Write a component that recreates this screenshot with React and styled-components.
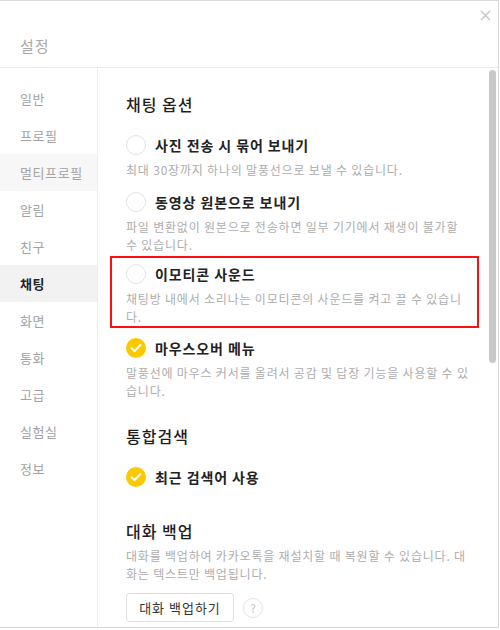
import styled, { createGlobalStyle } from "styled-components";

const GlobalStyle = createGlobalStyle`
  html, body {
    margin: 0;
    padding: 0;
    background: #fff;
  }
  body {
    font-family: "Noto Sans CJK KR", "Noto Sans", sans-serif;
  }
`;

const Window = styled.div`
  width: 499px;
  height: 628px;
  box-sizing: border-box;
  border: 1px solid #d9d9d9;
  border-left: none;
  background: #fff;
  display: flex;
  flex-direction: column;
  overflow: hidden;
`;

const Header = styled.div`
  height: 67px;
  box-sizing: border-box;
  border-bottom: 1px solid #e8e8e8;
  position: relative;
  padding: 35px 0 0 20px;
`;

const Title = styled.div`
  font-size: 15px;
  line-height: 20px;
  letter-spacing: 1px;
  color: #a8a8a8;
`;

const CloseButton = styled.button`
  position: absolute;
  top: 7px;
  right: 6px;
  width: 14px;
  height: 14px;
  padding: 0;
  border: none;
  background: none;
  display: flex;
  align-items: center;
  justify-content: center;
`;

const Body = styled.div`
  flex: 1;
  min-height: 0;
  display: flex;
`;

const Sidebar = styled.nav`
  width: 98px;
  box-sizing: border-box;
  border-right: 1px solid #ededed;
  padding-top: 12px;
  display: flex;
  flex-direction: column;
`;

const NavItem = styled.div`
  height: 37px;
  line-height: 37px;
  padding-left: 20px;
  font-size: 13px;
  letter-spacing: 0.6px;
  color: ${(p) => (p.$active ? "#222" : "#a3a3a3")};
  font-weight: ${(p) => (p.$active ? 700 : 400)};
  background: ${(p) =>
    p.$active ? "#f2f2f2" : p.$hover ? "#f7f7f7" : "transparent"};
`;

const Content = styled.div`
  flex: 1;
  position: relative;
  padding: 25px 0 0 28px;
  overflow: hidden;
`;

const Section = styled.section`
  width: 347px;
  margin-top: ${(p) => p.$gap || 0}px;
`;

const Heading = styled.h2`
  margin: 0;
  font-size: 16px;
  line-height: 22px;
  font-weight: 500;
  letter-spacing: 1px;
  color: #1e1e1e;
`;

const Option = styled.div`
  margin-top: ${(p) => (p.$first ? 20 : 13)}px;
  ${(p) =>
    p.$highlight &&
    `
    margin: 2px -6px -3px -16px;
    padding: 6px 4px 0 14px;
    border: 2px solid #ff1010;
  `}
`;

const Row = styled.label`
  display: flex;
  align-items: center;
  gap: 9px;
  height: 20px;
`;

const Check = styled.span`
  width: 20px;
  height: 20px;
  box-sizing: border-box;
  border-radius: 50%;
  flex-shrink: 0;
  display: flex;
  align-items: center;
  justify-content: center;
  background: ${(p) => (p.$checked ? "#fcc800" : "#fff")};
  border: ${(p) => (p.$checked ? "none" : "1px solid #e2e2e2")};
`;

const Label = styled.span`
  font-size: 14px;
  line-height: 20px;
  font-weight: 700;
  letter-spacing: 0.9px;
  color: #222;
`;

const Desc = styled.p`
  margin: ${(p) => p.$top || 6}px 0 0;
  font-size: 12px;
  line-height: 18px;
  letter-spacing: 0.8px;
  color: #adadad;
  word-break: break-all;
`;

const Actions = styled.div`
  display: flex;
  align-items: center;
  gap: 9px;
  margin-top: 10px;
`;

const Button = styled.button`
  width: 108px;
  height: 29px;
  box-sizing: border-box;
  border: 1px solid #e0e0e0;
  border-radius: 3px;
  background: #fff;
  font-family: inherit;
  font-size: 13px;
  letter-spacing: 1px;
  color: #333;
  padding: 0;
`;

const Help = styled.span`
  width: 20px;
  height: 20px;
  box-sizing: border-box;
  border: 1px solid #e3e3e3;
  border-radius: 50%;
  display: flex;
  align-items: center;
  justify-content: center;
  font-size: 11px;
  color: #c2c2c2;
`;

const ScrollThumb = styled.div`
  position: absolute;
  top: 2px;
  right: 2px;
  width: 7px;
  height: 293px;
  border-radius: 4px;
  background: #c8c8c8;
`;

const navItems = [
  "일반",
  "프로필",
  "멀티프로필",
  "알림",
  "친구",
  "채팅",
  "화면",
  "통화",
  "고급",
  "실험실",
  "정보",
];

function CheckMark() {
  return (
    <svg width="12" height="10" viewBox="0 0 12 10">
      <path
        d="M1.5 5.2 L4.6 8 L10.5 2"
        fill="none"
        stroke="#fff"
        strokeWidth="2"
        strokeLinecap="round"
        strokeLinejoin="round"
      />
    </svg>
  );
}

function SettingOption({ label, desc, checked, first, highlight }) {
  return (
    <Option $first={first} $highlight={highlight}>
      <Row>
        <Check $checked={checked}>{checked && <CheckMark />}</Check>
        <Label>{label}</Label>
      </Row>
      {desc && <Desc>{desc}</Desc>}
    </Option>
  );
}

export default function App() {
  return (
    <>
      <GlobalStyle />
      <Window>
        <Header>
          <Title>설정</Title>
          <CloseButton aria-label="닫기">
            <svg width="11" height="11" viewBox="0 0 11 11">
              <path
                d="M1 1 L10 10 M10 1 L1 10"
                stroke="#c4c4c4"
                strokeWidth="1.3"
              />
            </svg>
          </CloseButton>
        </Header>
        <Body>
          <Sidebar>
            {navItems.map((item) => (
              <NavItem
                key={item}
                $active={item === "채팅"}
                $hover={item === "멀티프로필"}
              >
                {item}
              </NavItem>
            ))}
          </Sidebar>
          <Content>
            <Section>
              <Heading>채팅 옵션</Heading>
              <SettingOption
                first
                label="사진 전송 시 묶어 보내기"
                desc="최대 30장까지 하나의 말풍선으로 보낼 수 있습니다."
              />
              <SettingOption
                label="동영상 원본으로 보내기"
                desc="파일 변환없이 원본으로 전송하면 일부 기기에서 재생이 불가할 수 있습니다."
              />
              <SettingOption
                highlight
                label="이모티콘 사운드"
                desc="채팅방 내에서 소리나는 이모티콘의 사운드를 켜고 끌 수 있습니다."
              />
              <SettingOption
                checked
                label="마우스오버 메뉴"
                desc="말풍선에 마우스 커서를 올려서 공감 및 답장 기능을 사용할 수 있습니다."
              />
            </Section>
            <Section $gap={25}>
              <Heading>통합검색</Heading>
              <SettingOption first checked label="최근 검색어 사용" />
            </Section>
            <Section $gap={33}>
              <Heading>대화 백업</Heading>
              <Desc $top={5}>
                대화를 백업하여 카카오톡을 재설치할 때 복원할 수 있습니다. 대화는
                텍스트만 백업됩니다.
              </Desc>
              <Actions>
                <Button>대화 백업하기</Button>
                <Help>?</Help>
              </Actions>
            </Section>
            <ScrollThumb />
          </Content>
        </Body>
      </Window>
    </>
  );
}
